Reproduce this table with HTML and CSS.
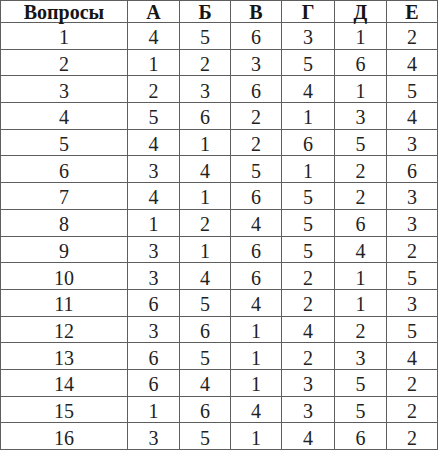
FILE: index.html
```html
<!DOCTYPE html>
<html lang="ru">
<head>
<meta charset="utf-8">
<link rel="stylesheet" href="styles.css">
</head>
<body>
<table class="grid">
  <colgroup>
    <col class="c-q"><col class="c-a"><col class="c-b"><col class="c-v"><col class="c-g"><col class="c-d"><col class="c-e">
  </colgroup>
  <thead>
    <tr><th>Вопросы</th><th>А</th><th>Б</th><th>В</th><th>Г</th><th>Д</th><th>Е</th></tr>
  </thead>
  <tbody>
    <tr><td>1</td><td>4</td><td>5</td><td>6</td><td>3</td><td>1</td><td>2</td></tr>
    <tr><td>2</td><td>1</td><td>2</td><td>3</td><td>5</td><td>6</td><td>4</td></tr>
    <tr><td>3</td><td>2</td><td>3</td><td>6</td><td>4</td><td>1</td><td>5</td></tr>
    <tr><td>4</td><td>5</td><td>6</td><td>2</td><td>1</td><td>3</td><td>4</td></tr>
    <tr><td>5</td><td>4</td><td>1</td><td>2</td><td>6</td><td>5</td><td>3</td></tr>
    <tr><td>6</td><td>3</td><td>4</td><td>5</td><td>1</td><td>2</td><td>6</td></tr>
    <tr><td>7</td><td>4</td><td>1</td><td>6</td><td>5</td><td>2</td><td>3</td></tr>
    <tr><td>8</td><td>1</td><td>2</td><td>4</td><td>5</td><td>6</td><td>3</td></tr>
    <tr><td>9</td><td>3</td><td>1</td><td>6</td><td>5</td><td>4</td><td>2</td></tr>
    <tr><td>10</td><td>3</td><td>4</td><td>6</td><td>2</td><td>1</td><td>5</td></tr>
    <tr><td>11</td><td>6</td><td>5</td><td>4</td><td>2</td><td>1</td><td>3</td></tr>
    <tr><td>12</td><td>3</td><td>6</td><td>1</td><td>4</td><td>2</td><td>5</td></tr>
    <tr><td>13</td><td>6</td><td>5</td><td>1</td><td>2</td><td>3</td><td>4</td></tr>
    <tr><td>14</td><td>6</td><td>4</td><td>1</td><td>3</td><td>5</td><td>2</td></tr>
    <tr><td>15</td><td>1</td><td>6</td><td>4</td><td>3</td><td>5</td><td>2</td></tr>
    <tr><td>16</td><td>3</td><td>5</td><td>1</td><td>4</td><td>6</td><td>2</td></tr>
  </tbody>
</table>
</body>
</html>
```
FILE: styles.css
```css
html, body {
  margin: 0;
  padding: 0;
  background: #ffffff;
}
.grid {
  border-collapse: collapse;
  table-layout: fixed;
  width: 438px;
  height: 450px;
  font-family: "Liberation Serif", "Times New Roman", serif;
  font-size: 20px;
  color: #222222;
}
.c-q { width: 127px; }
.c-a { width: 52px; }
.c-b { width: 51px; }
.c-v { width: 51px; }
.c-g { width: 53px; }
.c-d { width: 52px; }
.c-e { width: 51px; }
.grid th,
.grid td {
  border: 1px solid #5e5e5e;
  padding: 0;
  text-align: center;
  vertical-align: middle;
  line-height: 1;
  height: 18px;
}
.grid th {
  font-weight: bold;
  padding-top: 1px;
  color: #151515;
}
.grid td {
  padding-top: 3px;
}
```
